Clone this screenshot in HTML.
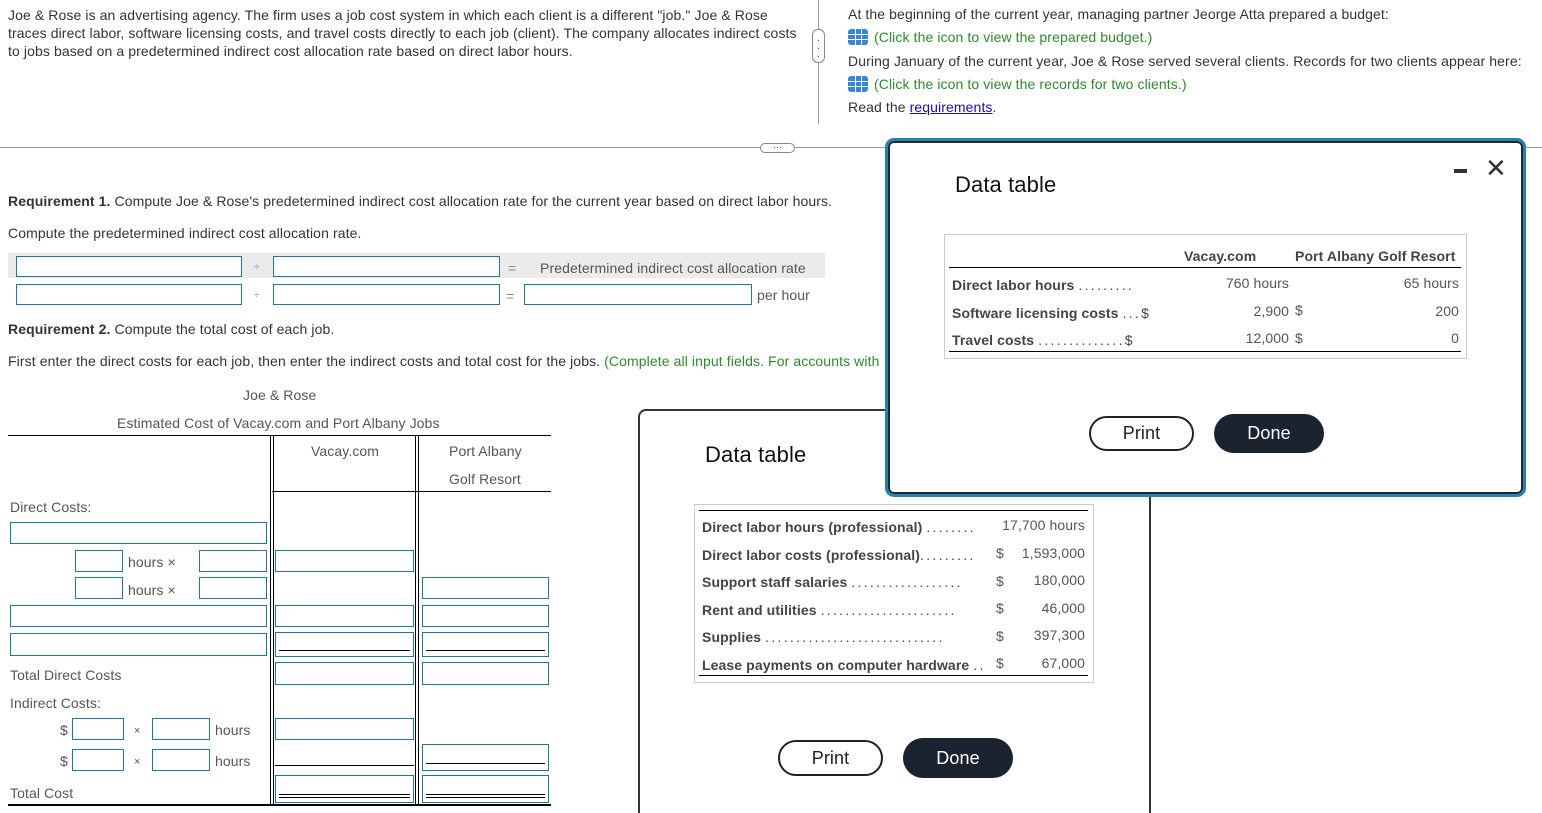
<!DOCTYPE html>
<html><head><meta charset="utf-8"><style>
*{box-sizing:border-box;margin:0;padding:0}
html,body{width:1542px;height:813px;overflow:hidden}
body{background:#fff;font-family:"Liberation Sans",Arial,sans-serif;font-size:14px;letter-spacing:0.1px;color:#333;position:relative}
.a{position:absolute;white-space:nowrap}
.t{position:absolute;white-space:nowrap;line-height:16px}
.in{position:absolute;border:1px solid #1f7a8c;background:#fff}
.ul{position:absolute;border-bottom:1px solid #000}
.g{color:#2d8a2d}
.ic{display:inline-block;width:20px;height:16px;background:#3a86d6;border-radius:3px;vertical-align:-3px;margin-right:6px;background-image:linear-gradient(#fff,#fff),linear-gradient(#fff,#fff),linear-gradient(#fff,#fff),linear-gradient(#fff,#fff);background-size:1px 16px,1px 16px,20px 1px,20px 1px;background-position:7px 0,13px 0,0 5px,0 10px;background-repeat:no-repeat}
.btnp{position:absolute;border:2px solid #222;border-radius:20px;text-align:center;font-size:18px;color:#222;background:#fff}
.btnd{position:absolute;background:#1b2230;border-radius:20px;text-align:center;font-size:18px;color:#fff}
.b{font-weight:bold;color:#444}
.d{font-weight:normal;letter-spacing:2.3px}
</style></head><body>

<div class="t" style="left:8px;top:6px;line-height:18px;white-space:normal;width:790px">Joe &amp; Rose is an advertising agency. The firm uses a job cost system in which each client is a different "job." Joe &amp; Rose traces direct labor, software licensing costs, and travel costs directly to each job (client). The company allocates indirect costs to jobs based on a predetermined indirect cost allocation rate based on direct labor hours.</div>

<div class="a" style="left:818px;top:0;width:1px;height:124px;background:#999"></div>
<div class="a" style="left:812px;top:29px;width:13px;height:34px;border:1px solid #888;border-radius:6px;background:#fff;text-align:center;font-size:10px;line-height:8px;padding-top:7px">·<br>·<br>·</div>

<div class="t" style="left:848px;top:6px">At the beginning of the current year, managing partner Jeorge Atta prepared a budget:</div>
<div class="t g" style="left:848px;top:29px"><span class="ic"></span>(Click the icon to view the prepared budget.)</div>
<div class="t" style="left:848px;top:53px">During January of the current year, Joe &amp; Rose served several clients. Records for two clients appear here:</div>
<div class="t g" style="left:848px;top:76px"><span class="ic"></span>(Click the icon to view the records for two clients.)</div>
<div class="t" style="left:848px;top:99px">Read the <span style="color:#1a0dab;text-decoration:underline">requirements</span>.</div>

<div class="a" style="left:0;top:147px;width:1542px;height:1px;background:#999"></div>
<div class="a" style="left:760px;top:143px;width:35px;height:10px;border:1px solid #888;border-radius:5px;background:#fff;font-size:9px;line-height:6px;text-align:center">···</div>

<div class="t" style="left:8px;top:193px"><b>Requirement 1.</b> Compute Joe &amp; Rose's predetermined indirect cost allocation rate for the current year based on direct labor hours.</div>
<div class="t" style="left:8px;top:225px">Compute the predetermined indirect cost allocation rate.</div>

<div class="a" style="left:8px;top:253px;width:817px;height:25px;background:#ebebeb"></div>
<div class="in" style="left:16px;top:256px;width:226px;height:21px"></div>
<div class="t" style="left:254px;top:260px;font-size:10px;color:#888">÷</div>
<div class="in" style="left:273px;top:256px;width:227px;height:21px"></div>
<div class="t" style="left:508px;top:260px;color:#888">=</div>
<div class="t" style="left:540px;top:260px;color:#555">Predetermined indirect cost allocation rate</div>
<div class="in" style="left:16px;top:284px;width:226px;height:21px"></div>
<div class="t" style="left:254px;top:288px;font-size:10px;color:#888">÷</div>
<div class="in" style="left:273px;top:284px;width:227px;height:21px"></div>
<div class="t" style="left:506px;top:288px;color:#888">=</div>
<div class="in" style="left:524px;top:284px;width:228px;height:21px"></div>
<div class="t" style="left:757px;top:287px;color:#555">per hour</div>

<div class="t" style="left:8px;top:321px"><b>Requirement 2.</b> Compute the total cost of each job.</div>
<div class="t" style="left:8px;top:353px">First enter the direct costs for each job, then enter the indirect costs and total cost for the jobs. <span class="g">(Complete all input fields. For accounts with</span></div>

<div class="t" style="left:243px;top:387px;color:#555">Joe &amp; Rose</div>
<div class="t" style="left:117px;top:415px;color:#555">Estimated Cost of Vacay.com and Port Albany Jobs</div>
<div class="a" style="left:8px;top:435px;width:543px;height:1px;background:#000"></div>
<div class="a" style="left:270px;top:435px;width:4px;height:371px;border-left:1px solid #000;border-right:1px solid #000"></div>
<div class="a" style="left:415px;top:435px;width:4px;height:371px;border-left:1px solid #000;border-right:1px solid #000"></div>
<div class="t" style="left:311px;top:443px;color:#555">Vacay.com</div>
<div class="t" style="left:449px;top:443px;color:#555">Port Albany</div>
<div class="t" style="left:449px;top:471px;color:#555">Golf Resort</div>
<div class="a" style="left:272px;top:491px;width:279px;height:1px;background:#000"></div>
<div class="a" style="left:8px;top:804px;width:543px;height:2px;background:#000"></div>

<div class="t" style="left:10px;top:499px;color:#555">Direct Costs:</div>
<div class="in" style="left:10px;top:522px;width:257px;height:22px"></div>
<div class="in" style="left:75px;top:550px;width:48px;height:22px"></div>
<div class="t" style="left:128px;top:554px;color:#555">hours ×</div>
<div class="in" style="left:199px;top:550px;width:68px;height:22px"></div>
<div class="in" style="left:275px;top:550px;width:139px;height:22px"></div>
<div class="in" style="left:75px;top:577px;width:48px;height:22px"></div>
<div class="t" style="left:128px;top:582px;color:#555">hours ×</div>
<div class="in" style="left:199px;top:577px;width:68px;height:22px"></div>
<div class="in" style="left:422px;top:577px;width:127px;height:22px"></div>
<div class="in" style="left:10px;top:605px;width:257px;height:22px"></div>
<div class="in" style="left:275px;top:605px;width:139px;height:22px"></div>
<div class="in" style="left:422px;top:605px;width:127px;height:22px"></div>
<div class="in" style="left:10px;top:633px;width:257px;height:23px"></div>
<div class="in" style="left:275px;top:632px;width:139px;height:25px"></div>
<div class="ul" style="left:279px;top:650px;width:131px"></div>
<div class="in" style="left:422px;top:632px;width:127px;height:25px"></div>
<div class="ul" style="left:426px;top:650px;width:119px"></div>
<div class="t" style="left:10px;top:667px;color:#555">Total Direct Costs</div>
<div class="in" style="left:275px;top:662px;width:139px;height:23px"></div>
<div class="in" style="left:422px;top:662px;width:127px;height:23px"></div>
<div class="t" style="left:10px;top:695px;color:#555">Indirect Costs:</div>
<div class="t" style="left:60px;top:722px;color:#555">$</div>
<div class="in" style="left:72px;top:718px;width:52px;height:22px"></div>
<div class="t" style="left:134px;top:723px;color:#555;font-size:11px">×</div>
<div class="in" style="left:152px;top:718px;width:58px;height:22px"></div>
<div class="t" style="left:215px;top:722px;color:#555">hours</div>
<div class="in" style="left:275px;top:718px;width:139px;height:22px"></div>
<div class="t" style="left:60px;top:753px;color:#555">$</div>
<div class="in" style="left:72px;top:749px;width:52px;height:22px"></div>
<div class="t" style="left:134px;top:754px;color:#555;font-size:11px">×</div>
<div class="in" style="left:152px;top:749px;width:58px;height:22px"></div>
<div class="t" style="left:215px;top:753px;color:#555">hours</div>
<div class="ul" style="left:275px;top:765px;width:139px"></div>
<div class="in" style="left:422px;top:744px;width:127px;height:27px"></div>
<div class="ul" style="left:426px;top:763px;width:119px"></div>
<div class="t" style="left:10px;top:785px;color:#555">Total Cost</div>
<div class="in" style="left:275px;top:775px;width:139px;height:28px"></div>
<div class="a" style="left:279px;top:794px;width:131px;height:4px;border-top:1px solid #000;border-bottom:1px solid #000"></div>
<div class="in" style="left:422px;top:775px;width:127px;height:28px"></div>
<div class="a" style="left:426px;top:794px;width:119px;height:4px;border-top:1px solid #000;border-bottom:1px solid #000"></div>

<!-- back modal -->
<div class="a" style="left:638px;top:409px;width:513px;height:404px;border:2px solid #333;border-bottom:none;border-radius:8px 8px 0 0;background:#fff"></div>
<div class="a" style="left:705px;top:442px;font-size:22px;color:#111">Data table</div>
<div class="a" style="left:694px;top:504px;width:400px;height:179px;border:1px solid #ccc"></div>
<div class="a" style="left:699px;top:510px;width:389px;height:1px;background:#000"></div>
<div class="a" style="left:699px;top:675px;width:389px;height:1px;background:#000"></div>
<div class="t b" style="left:702px;top:519px">Direct labor hours (professional) <span class="d">........</span></div>
<div class="t b" style="left:702px;top:547px">Direct labor costs (professional)<span class="d">.........</span></div>
<div class="t b" style="left:702px;top:574px">Support staff salaries <span class="d">..................</span></div>
<div class="t b" style="left:702px;top:602px">Rent and utilities <span class="d">......................</span></div>
<div class="t b" style="left:702px;top:629px">Supplies <span class="d">.............................</span></div>
<div class="t b" style="left:702px;top:657px">Lease payments on computer hardware <span class="d">..</span></div>
<div class="a" style="left:990px;top:512px;width:95px;text-align:right;line-height:27.5px;color:#555">17,700 hours<br>1,593,000<br>180,000<br>46,000<br>397,300<br>67,000</div>
<div class="a" style="left:996px;top:540px;line-height:27.5px;color:#555">$<br>$<br>$<br>$<br>$</div>
<div class="btnp" style="left:778px;top:740px;width:105px;height:36px;line-height:32px">Print</div>
<div class="btnd" style="left:903px;top:738px;width:110px;height:40px;line-height:40px">Done</div>

<!-- front modal -->
<div class="a" style="left:885px;top:138px;width:641px;height:359px;border:3px solid #2b7fae;border-radius:9px;box-shadow:inset 0 0 0 2px #1a2a33;background:#fff"></div>
<div class="a" style="left:955px;top:172px;font-size:22px;color:#111">Data table</div>
<div class="a" style="left:1454px;top:169px;width:13px;height:4px;background:#333"></div>
<div class="a" style="left:1485px;top:153px;font-size:26px;color:#333;font-weight:300">✕</div>
<div class="a" style="left:944px;top:234px;width:523px;height:125px;border:1px solid #ccc"></div>
<div class="t b" style="left:1184px;top:248px">Vacay.com</div>
<div class="t b" style="left:1295px;top:248px">Port Albany Golf Resort</div>
<div class="a" style="left:949px;top:267px;width:512px;height:1px;background:#000"></div>
<div class="t b" style="left:952px;top:277px">Direct labor hours <span class="d">.........</span></div>
<div class="t b" style="left:952px;top:305px">Software licensing costs <span class="d">...</span><span style="font-weight:normal">$</span></div>
<div class="t b" style="left:952px;top:332px">Travel costs <span class="d">..............</span><span style="font-weight:normal">$</span></div>
<div class="a" style="left:1190px;top:270px;width:99px;text-align:right;line-height:27.5px;color:#555">760 hours<br>2,900<br>12,000</div>
<div class="a" style="left:1295px;top:297px;line-height:27.5px;color:#555">$<br>$</div>
<div class="a" style="left:1360px;top:270px;width:99px;text-align:right;line-height:27.5px;color:#555">65 hours<br>200<br>0</div>
<div class="a" style="left:949px;top:351px;width:512px;height:1px;background:#000"></div>
<div class="btnp" style="left:1089px;top:416px;width:105px;height:35px;line-height:31px">Print</div>
<div class="btnd" style="left:1214px;top:414px;width:110px;height:39px;line-height:39px">Done</div>
</body></html>
